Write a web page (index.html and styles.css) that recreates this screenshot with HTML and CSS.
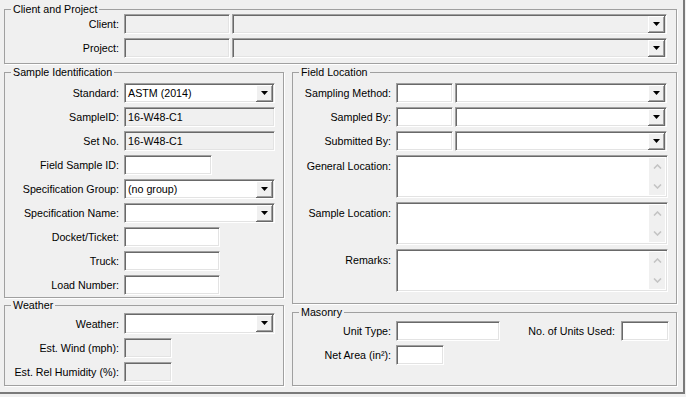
FILE: index.html
```html
<!DOCTYPE html>
<html lang="en">
<head>
    <meta charset="UTF-8">
    <title>Sample</title>
    <link rel="stylesheet" href="styles.css">
</head>
<body>
    <div class="window">
        <fieldset class="group client">
            <legend>Client and Project</legend>
            <div class="row">
                <label class="lbl">Client:</label>
                <div class="box off w-106"></div>
                <div class="combo off w-435 pair"><span class="val"></span><span class="drop"><svg width="7" height="4" viewBox="0 0 7 4"><path d="M0 0h7L3.5 4z"/></svg></span></div>
            </div>
            <div class="row">
                <label class="lbl">Project:</label>
                <div class="box off w-106"></div>
                <div class="combo off w-435 pair"><span class="val"></span><span class="drop"><svg width="7" height="4" viewBox="0 0 7 4"><path d="M0 0h7L3.5 4z"/></svg></span></div>
            </div>
        </fieldset>

        <div class="columns">
            <div class="col left">
                <fieldset class="group sample">
                    <legend>Sample Identification</legend>
                    <div class="row">
                        <label class="lbl">Standard:</label>
                        <div class="combo w-151"><span class="val">ASTM (2014)</span><span class="drop"><svg width="7" height="4" viewBox="0 0 7 4"><path d="M0 0h7L3.5 4z"/></svg></span></div>
                    </div>
                    <div class="row">
                        <label class="lbl">SampleID:</label>
                        <div class="box off w-151">16-W48-C1</div>
                    </div>
                    <div class="row">
                        <label class="lbl">Set No.</label>
                        <div class="box off w-151">16-W48-C1</div>
                    </div>
                    <div class="row">
                        <label class="lbl">Field Sample ID:</label>
                        <div class="box w-88"></div>
                    </div>
                    <div class="row">
                        <label class="lbl">Specification Group:</label>
                        <div class="combo w-151"><span class="val">(no group)</span><span class="drop"><svg width="7" height="4" viewBox="0 0 7 4"><path d="M0 0h7L3.5 4z"/></svg></span></div>
                    </div>
                    <div class="row">
                        <label class="lbl">Specification Name:</label>
                        <div class="combo w-151"><span class="val"></span><span class="drop"><svg width="7" height="4" viewBox="0 0 7 4"><path d="M0 0h7L3.5 4z"/></svg></span></div>
                    </div>
                    <div class="row">
                        <label class="lbl">Docket/Ticket:</label>
                        <div class="box w-96"></div>
                    </div>
                    <div class="row">
                        <label class="lbl">Truck:</label>
                        <div class="box w-96"></div>
                    </div>
                    <div class="row">
                        <label class="lbl">Load Number:</label>
                        <div class="box w-96"></div>
                    </div>
                </fieldset>

                <fieldset class="group weather">
                    <legend>Weather</legend>
                    <div class="row tall">
                        <label class="lbl">Weather:</label>
                        <div class="combo w-151"><span class="val"></span><span class="drop"><svg width="7" height="4" viewBox="0 0 7 4"><path d="M0 0h7L3.5 4z"/></svg></span></div>
                    </div>
                    <div class="row">
                        <label class="lbl">Est. Wind (mph):</label>
                        <div class="box off w-48"></div>
                    </div>
                    <div class="row">
                        <label class="lbl">Est. Rel Humidity (%):</label>
                        <div class="box off w-48"></div>
                    </div>
                </fieldset>
            </div>

            <div class="col right">
                <fieldset class="group field">
                    <legend>Field Location</legend>
                    <div class="row">
                        <label class="lbl">Sampling Method:</label>
                        <div class="box w-57"></div>
                        <div class="combo w-212 pair"><span class="val"></span><span class="drop"><svg width="7" height="4" viewBox="0 0 7 4"><path d="M0 0h7L3.5 4z"/></svg></span></div>
                    </div>
                    <div class="row">
                        <label class="lbl">Sampled By:</label>
                        <div class="box w-57"></div>
                        <div class="combo w-212 pair"><span class="val"></span><span class="drop"><svg width="7" height="4" viewBox="0 0 7 4"><path d="M0 0h7L3.5 4z"/></svg></span></div>
                    </div>
                    <div class="row">
                        <label class="lbl">Submitted By:</label>
                        <div class="box w-57"></div>
                        <div class="combo w-212 pair"><span class="val"></span><span class="drop"><svg width="7" height="4" viewBox="0 0 7 4"><path d="M0 0h7L3.5 4z"/></svg></span></div>
                    </div>
                    <div class="row memo-row">
                        <label class="lbl">General Location:</label>
                        <div class="memo">
                            <div class="memo-text"></div>
                            <div class="vscroll">
                                <span class="sbtn"><svg width="9" height="5" viewBox="0 0 9 5"><path d="M1 4.5L4.5 1 8 4.5"/></svg></span>
                                <span class="sbtn"><svg width="9" height="5" viewBox="0 0 9 5"><path d="M1 .5L4.5 4 8 .5"/></svg></span>
                            </div>
                        </div>
                    </div>
                    <div class="row memo-row">
                        <label class="lbl">Sample Location:</label>
                        <div class="memo">
                            <div class="memo-text"></div>
                            <div class="vscroll">
                                <span class="sbtn"><svg width="9" height="5" viewBox="0 0 9 5"><path d="M1 4.5L4.5 1 8 4.5"/></svg></span>
                                <span class="sbtn"><svg width="9" height="5" viewBox="0 0 9 5"><path d="M1 .5L4.5 4 8 .5"/></svg></span>
                            </div>
                        </div>
                    </div>
                    <div class="row memo-row">
                        <label class="lbl">Remarks:</label>
                        <div class="memo">
                            <div class="memo-text"></div>
                            <div class="vscroll">
                                <span class="sbtn"><svg width="9" height="5" viewBox="0 0 9 5"><path d="M1 4.5L4.5 1 8 4.5"/></svg></span>
                                <span class="sbtn"><svg width="9" height="5" viewBox="0 0 9 5"><path d="M1 .5L4.5 4 8 .5"/></svg></span>
                            </div>
                        </div>
                    </div>
                </fieldset>

                <fieldset class="group masonry">
                    <legend>Masonry</legend>
                    <div class="row">
                        <label class="lbl">Unit Type:</label>
                        <div class="box w-104"></div>
                        <label class="lbl units">No. of Units Used:</label>
                        <div class="box w-48"></div>
                    </div>
                    <div class="row">
                        <label class="lbl">Net Area (in²):</label>
                        <div class="box w-48"></div>
                    </div>
                </fieldset>
            </div>
        </div>
    </div>
</body>
</html>
```

FILE: styles.css
```css
body {
    margin: 0;
    background: #f0f0f0;
    font-family: "Liberation Sans", Arial, sans-serif;
    font-size: 10.7px;
    color: #000;
}
.window {
    box-sizing: border-box;
    width: 685px;
    height: 394px;
    padding: 5px 0 0 4px;
    border-right: 2px solid #7a7a7a;
    border-bottom: 2px solid #7a7a7a;
}

/* group boxes */
.group {
    box-sizing: border-box;
    margin: 0;
    padding: 0;
    min-width: 0;
    border: 1px solid #a0a0a0;
    box-shadow: 1px 1px 0 #fff;
}
.group legend {
    margin-left: 6px;
    padding: 0 2px;
    line-height: 9px;
}
.client {
    width: 673px;
    padding-bottom: 5px;
}
.columns {
    display: flex;
    gap: 8px;
    margin-top: 4px;
}
.col {
    display: flex;
    flex-direction: column;
}
.left {
    width: 280px;
    gap: 3px;
}
.right {
    width: 385px;
    gap: 4px;
}
.sample {
    padding: 6px 0 2px;
}
.weather {
    padding: 3px 0 3px;
}
.field {
    padding: 6px 7px 11px 0;
}
.masonry {
    padding: 4px 7px 20px 0;
}

/* rows */
.group .row + .row {
    margin-top: 4px;
}
.row {
    display: flex;
    align-items: center;
    height: 20px;
}
.row.tall {
    height: 21px;
}
.lbl {
    width: 114px;
    margin-right: 5px;
    text-align: right;
    white-space: nowrap;
    line-height: 20px;
}
.field .lbl,
.masonry .lbl {
    width: 98px;
}
.masonry .lbl.units {
    width: auto;
    flex: 1;
    margin-right: 6px;
}

/* edit boxes */
.box,
.combo,
.memo {
    box-sizing: border-box;
    height: 100%;
    background: #fff;
    border-top: 1px solid #a0a0a0;
    border-left: 1px solid #a0a0a0;
    border-right: 1px solid #fff;
    border-bottom: 1px solid #fff;
    box-shadow: inset 1px 1px 0 #696969, inset -1px -1px 0 #e3e3e3;
}
.box {
    padding: 0 3px;
    line-height: 18px;
    white-space: nowrap;
    overflow: hidden;
}
.off {
    background: #f0f0f0;
}
.pair {
    margin-left: 2px;
}
.combo {
    display: flex;
    padding: 1px;
}
.combo .val {
    flex: 1;
    padding-left: 2px;
    line-height: 16px;
}
.drop {
    box-sizing: border-box;
    width: 17px;
    height: 17px;
    display: flex;
    align-items: center;
    justify-content: center;
    background: #f0f0f0;
    border-right: 1px solid #696969;
    border-bottom: 1px solid #696969;
    box-shadow: inset 1px 1px 0 #fff, inset -1px -1px 0 #a0a0a0;
}
.drop svg {
    fill: #000;
}

.w-48 { width: 48px; }
.w-57 { width: 57px; }
.w-88 { width: 88px; }
.w-96 { width: 96px; }
.w-104 { width: 104px; }
.w-106 { width: 106px; }
.w-151 { width: 151px; }
.w-212 { width: 212px; }
.w-435 { width: 435px; }

/* multi-line fields */
.row.memo-row {
    height: 43px;
    align-items: flex-start;
}
.memo-row .lbl {
    padding-top: 1px;
}
.memo {
    display: flex;
    width: 272px;
    padding: 2px;
}
.memo-text {
    flex: 1;
}
.vscroll {
    width: 16px;
    display: flex;
    flex-direction: column;
    justify-content: space-between;
    background: #f0f0f0;
}
.sbtn {
    height: 17px;
    display: flex;
    align-items: center;
    justify-content: center;
}
.sbtn svg path {
    fill: none;
    stroke: #c4c4c4;
    stroke-width: 1.6;
}
```
